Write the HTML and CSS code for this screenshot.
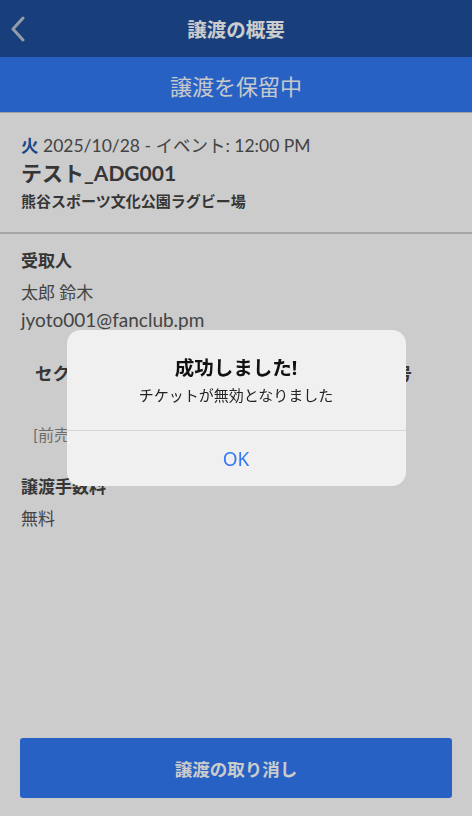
FILE: index.html
```html
<!DOCTYPE html>
<html lang="ja">
<head>
  <meta charset="UTF-8">
  <title>譲渡の概要</title>
  <link rel="stylesheet" href="styles.css">
</head>
<body>
  <div class="screen">
    <header class="nav">
      <svg class="back" width="16" height="26" viewBox="0 0 16 26">
        <path d="M13 2 L3 13 L13 24" fill="none" stroke="#b9c3d2" stroke-width="3" stroke-linecap="round" stroke-linejoin="round"/>
      </svg>
      <h1>譲渡の概要</h1>
    </header>
    <div class="status">譲渡を保留中</div>

    <section class="event">
      <p class="date"><span class="day">火</span> 2025/10/28 - イベント: 12:00 PM</p>
      <h2>テスト_ADG001</h2>
      <p class="venue">熊谷スポーツ文化公園ラグビー場</p>
    </section>

    <section class="block">
      <h3>受取人</h3>
      <p class="name">太郎 鈴木</p>
      <p class="mail">jyoto001@fanclub.pm</p>
    </section>

    <section class="seat">
      <div class="seat-row labels">
        <span>セクション</span>
        <span>列</span>
        <span>座席番号</span>
      </div>
      <div class="seat-row values">
        <span>[前売] 自由席</span>
        <span></span>
        <span></span>
      </div>
    </section>

    <section class="block fee">
      <h3>譲渡手数料</h3>
      <p class="name">無料</p>
    </section>

    <div class="footer">
      <button class="cancel">譲渡の取り消し</button>
    </div>
  </div>

  <div class="overlay">
    <div class="alert">
      <div class="alert-body">
        <h4>成功しました!</h4>
        <p>チケットが無効となりました</p>
      </div>
      <button class="alert-ok">OK</button>
    </div>
  </div>
</body>
</html>
```

FILE: styles.css
```css
body {
  margin: 0;
  font-family: Lato, "Noto Sans CJK JP", sans-serif;
  background-color: #fff;
  color: #444;
}

.screen {
  height: 816px;
  display: flex;
  flex-direction: column;
}

.nav {
  height: 57px;
  background-color: #1e4f9a;
  display: flex;
  align-items: center;
  justify-content: center;
  position: relative;
}

.nav .back {
  position: absolute;
  left: 10px;
  top: 16px;
}

.nav h1 {
  margin: 0;
  font-size: 19.5px;
  font-weight: bold;
  color: #fff;
}

.status {
  height: 55px;
  background-color: #317af6;
  color: #f8faff;
  font-size: 22px;
  display: flex;
  align-items: center;
  justify-content: center;
  border-bottom: 1px solid #c8c8c8;
}

.event {
  padding: 22px 21px 21px;
  border-bottom: 2px solid #d0d0d0;
}

.event p {
  margin: 0;
}

.date {
  font-size: 17.5px;
  line-height: 22px;
  color: #555;
}

.day {
  color: #1f5bb0;
  font-weight: bold;
}

.event h2 {
  margin: 3px 0 0;
  font-size: 21px;
  line-height: 26px;
  font-weight: bold;
  color: #444;
}

.event .venue {
  margin-top: 5px;
  font-size: 15px;
  line-height: 20px;
  font-weight: bold;
  color: #444;
}

.block {
  padding: 15px 21px 0;
}

.block h3 {
  margin: 0;
  font-size: 17px;
  line-height: 24px;
  font-weight: bold;
  color: #444;
}

.block p {
  margin: 0;
  color: #555;
}

.block .name {
  font-size: 17px;
  line-height: 24px;
  margin-top: 8px;
}

.block .mail {
  font-size: 19px;
  line-height: 26px;
  margin-top: 2px;
}

.seat {
  padding: 28px 60px 14px 35px;
}

.seat-row {
  display: grid;
  grid-template-columns: 1fr 1fr auto;
}

.seat-row span:nth-child(2) {
  text-align: center;
}

.labels {
  font-size: 17.5px;
  font-weight: bold;
  line-height: 26px;
  color: #444;
}

.values {
  margin-top: 37px;
  margin-left: -2px;
  font-size: 16px;
  line-height: 22px;
  color: #888;
}

.footer {
  margin-top: auto;
  padding: 0 20px 18px;
}

.cancel {
  width: 100%;
  height: 60px;
  border: none;
  border-radius: 3px;
  background-color: #317af6;
  color: #fff;
  font-family: Lato, "Noto Sans CJK JP", sans-serif;
  font-size: 17.5px;
  font-weight: bold;
}

.overlay {
  position: fixed;
  inset: 0;
  background-color: rgba(0, 0, 0, 0.2);
  display: flex;
  align-items: center;
  justify-content: center;
}

.alert {
  width: 339px;
  background-color: #f0f0f0;
  border-radius: 14px;
  overflow: hidden;
  font-family: "Noto Sans", "Noto Sans CJK JP", sans-serif;
}

.alert-body {
  padding: 25px 16px 23px;
  text-align: center;
  border-bottom: 1px solid #d6d6d6;
}

.alert-body h4 {
  margin: 0;
  font-size: 19.5px;
  line-height: 26px;
  font-weight: bold;
  color: #111;
}

.alert-body p {
  margin: 2px 0 0;
  font-size: 15px;
  line-height: 24px;
  color: #222;
}

.alert-ok {
  display: block;
  width: 100%;
  height: 55px;
  border: none;
  background: none;
  color: #3478f6;
  font-family: "Noto Sans", sans-serif;
  font-size: 19px;
}
```
